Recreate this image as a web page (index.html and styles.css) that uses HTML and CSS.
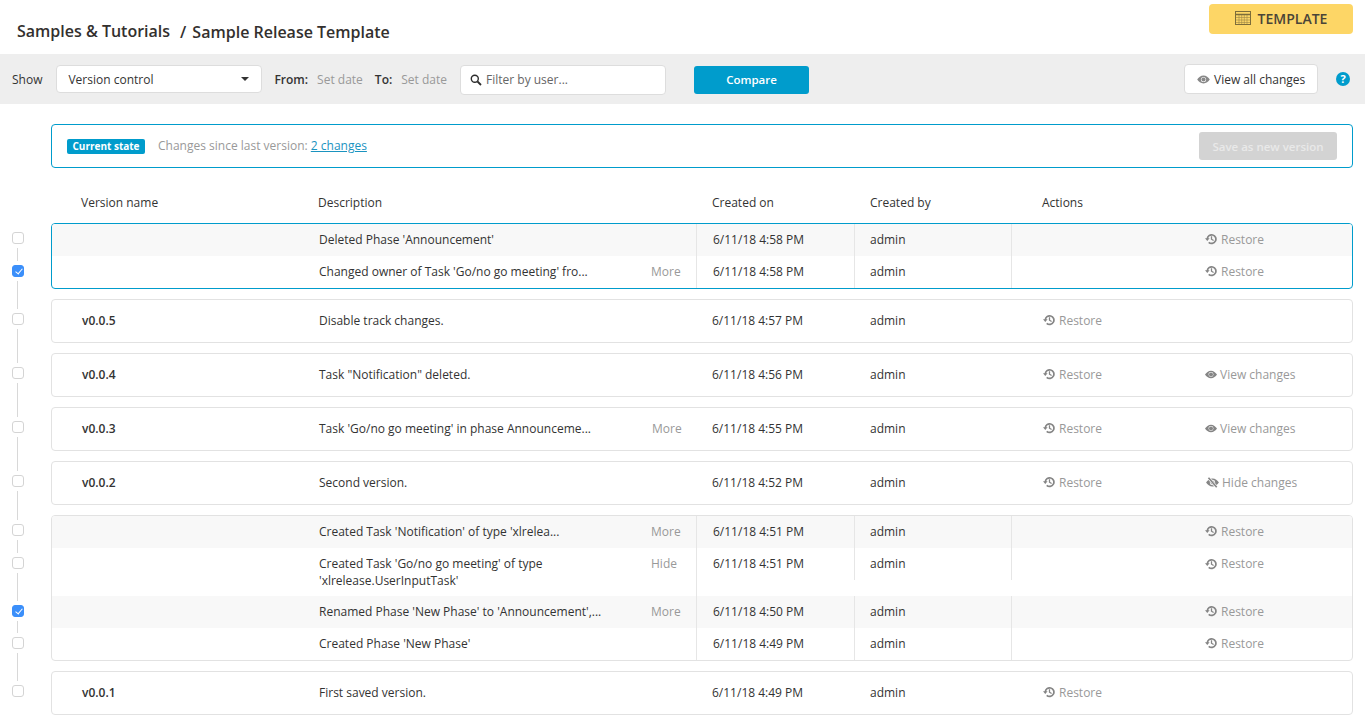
FILE: index.html
```html
<!DOCTYPE html>
<html lang="en">
<head>
<meta charset="utf-8">
<title>Sample Release Template</title>
<link rel="stylesheet" href="styles.css">
</head>
<body>
<svg class="defs" width="0" height="0" aria-hidden="true">
  <symbol id="restore" viewBox="0 0 12 12">
    <path d="M2.300 6a4.300 4.300 0 1 1 1.400 3.300" fill="none" stroke="currentColor" stroke-width="1.700"/>
    <path d="M0 5.200h4.600L2.300 8z" fill="currentColor"/>
    <path d="M6.500 3.200v3l2.100 1.300" fill="none" stroke="currentColor" stroke-width="1.300"/>
  </symbol>
  <symbol id="eye" viewBox="0 0 14 10">
    <path fill-rule="evenodd" fill="currentColor" d="M7 .6C10 .6 12.500 2.800 14 5c-1.500 2.200-4 4.400-7 4.400S1.500 7.200 0 5C1.500 2.800 4 .6 7 .6zM7 2.100a2.900 2.900 0 1 0 0 5.800 2.900 2.900 0 0 0 0-5.800z"/>
    <circle cx="7" cy="5" r="2.300" fill="currentColor"/>
  </symbol>
  <symbol id="eye-off" viewBox="0 0 14 12">
    <path fill-rule="evenodd" fill="currentColor" d="M7 1.600c3 0 5.500 2.200 7 4.400-1.500 2.200-4 4.400-7 4.400S1.500 8.200 0 6c1.500-2.200 4-4.400 7-4.400zM7 3.100a2.900 2.900 0 1 0 0 5.800 2.900 2.900 0 0 0 0-5.800z"/>
    <circle cx="7" cy="6" r="2.200" fill="currentColor"/>
    <path d="M2.600.8l9 10.400" stroke="#fff" stroke-width="3"/>
    <path d="M2.600.8l9 10.400" stroke="currentColor" stroke-width="1.800"/>
  </symbol>
</svg>

<header class="topbar">
  <h1 class="crumbs"><span class="crumb-folder">Samples &amp; Tutorials</span><span class="crumb-sep">/</span><span class="crumb-title">Sample Release Template</span></h1>
  <button class="template-btn" type="button">
    <svg class="template-icon" viewBox="0 0 16 14" aria-hidden="true">
      <rect x=".5" y=".5" width="15" height="13" fill="none" stroke="currentColor"/>
      <path d="M.5 3.500h15" stroke="currentColor" stroke-width="1.500"/>
      <path d="M4 4v9M6.700 4v9M9.300 4v9M12 4v9M1 6.500h14M1 9h14M1 11.500h14" stroke="currentColor" stroke-width=".6" opacity=".75"/>
    </svg>
    TEMPLATE
  </button>
</header>

<section class="toolbar">
  <span class="show-label">Show</span>
  <div class="select">Version control<span class="caret"></span></div>
  <span class="date-label from">From:</span><span class="date-value">Set date</span>
  <span class="date-label to">To:</span><span class="date-value">Set date</span>
  <div class="filter">
    <svg class="search-icon" viewBox="0 0 12 12" aria-hidden="true"><circle cx="4.800" cy="4.800" r="3.500" fill="none" stroke="currentColor" stroke-width="1.400"/><path d="M7.500 7.500l3.500 3.500" stroke="currentColor" stroke-width="1.800"/></svg>
    <span>Filter by user...</span>
  </div>
  <button class="compare-btn" type="button">Compare</button>
  <button class="view-all-btn" type="button"><svg class="eye-icon"><use href="#eye"/></svg>View all changes</button>
  <span class="help">?</span>
</section>

<main class="layout">
  <div class="rail">
    <div class="slot h33"><span class="tick"></span><span class="link"></span></div>
    <div class="slot h48"><span class="tick on"></span><span class="link"></span></div>
    <div class="slot h54"><span class="tick"></span><span class="link"></span></div>
    <div class="slot h54"><span class="tick"></span><span class="link"></span></div>
    <div class="slot h54"><span class="tick"></span><span class="link"></span></div>
    <div class="slot h49"><span class="tick"></span><span class="link"></span></div>
    <div class="slot h33"><span class="tick"></span><span class="link"></span></div>
    <div class="slot h48"><span class="tick"></span><span class="link"></span></div>
    <div class="slot h32"><span class="tick on"></span><span class="link"></span></div>
    <div class="slot h48"><span class="tick"></span><span class="link"></span></div>
    <div class="slot"><span class="tick"></span></div>
  </div>

  <div class="content">
    <div class="current">
      <span class="badge">Current state</span>
      <span class="since">Changes since last version: <a href="#">2 changes</a></span>
      <button class="save-btn" type="button">Save as new version</button>
    </div>

    <div class="heads">
      <span>Version name</span><span>Description</span><span>Created on</span><span>Created by</span><span>Actions</span>
    </div>

    <div class="cards">
      <div class="card active">
        <div class="row sub shaded">
          <div class="c-name"></div><div class="c-desc"><span>Deleted Phase 'Announcement'</span></div>
          <div class="c-date">6/11/18 4:58 PM</div><div class="c-user">admin</div><div class="c-act"></div>
          <div class="c-act2"><a class="action"><svg class="ico-restore"><use href="#restore"/></svg>Restore</a></div>
        </div>
        <div class="row sub">
          <div class="c-name"></div><div class="c-desc"><span>Changed owner of Task 'Go/no go meeting' fro...</span><a class="more">More</a></div>
          <div class="c-date">6/11/18 4:58 PM</div><div class="c-user">admin</div><div class="c-act"></div>
          <div class="c-act2"><a class="action"><svg class="ico-restore"><use href="#restore"/></svg>Restore</a></div>
        </div>
      </div>

      <div class="card">
        <div class="row ver">
          <div class="c-name">v0.0.5</div><div class="c-desc"><span>Disable track changes.</span></div>
          <div class="c-date">6/11/18 4:57 PM</div><div class="c-user">admin</div>
          <div class="c-act"><a class="action"><svg class="ico-restore"><use href="#restore"/></svg>Restore</a></div><div class="c-act2"></div>
        </div>
      </div>

      <div class="card">
        <div class="row ver">
          <div class="c-name">v0.0.4</div><div class="c-desc"><span>Task "Notification" deleted.</span></div>
          <div class="c-date">6/11/18 4:56 PM</div><div class="c-user">admin</div>
          <div class="c-act"><a class="action"><svg class="ico-restore"><use href="#restore"/></svg>Restore</a></div>
          <div class="c-act2"><a class="action"><svg class="ico-eye"><use href="#eye"/></svg>View changes</a></div>
        </div>
      </div>

      <div class="card">
        <div class="row ver">
          <div class="c-name">v0.0.3</div><div class="c-desc"><span>Task 'Go/no go meeting' in phase Announceme...</span><a class="more">More</a></div>
          <div class="c-date">6/11/18 4:55 PM</div><div class="c-user">admin</div>
          <div class="c-act"><a class="action"><svg class="ico-restore"><use href="#restore"/></svg>Restore</a></div>
          <div class="c-act2"><a class="action"><svg class="ico-eye"><use href="#eye"/></svg>View changes</a></div>
        </div>
      </div>

      <div class="card">
        <div class="row ver">
          <div class="c-name">v0.0.2</div><div class="c-desc"><span>Second version.</span></div>
          <div class="c-date">6/11/18 4:52 PM</div><div class="c-user">admin</div>
          <div class="c-act"><a class="action"><svg class="ico-restore"><use href="#restore"/></svg>Restore</a></div>
          <div class="c-act2"><a class="action hide"><svg class="ico-eye-off"><use href="#eye-off"/></svg>Hide changes</a></div>
        </div>
      </div>

      <div class="card">
        <div class="row sub shaded">
          <div class="c-name"></div><div class="c-desc"><span>Created Task 'Notification' of type 'xlrelea...</span><a class="more">More</a></div>
          <div class="c-date">6/11/18 4:51 PM</div><div class="c-user">admin</div><div class="c-act"></div>
          <div class="c-act2"><a class="action"><svg class="ico-restore"><use href="#restore"/></svg>Restore</a></div>
        </div>
        <div class="row sub tall">
          <div class="c-name"></div><div class="c-desc"><span class="wrap">Created Task 'Go/no go meeting' of type 'xlrelease.UserInputTask'</span><a class="more">Hide</a></div>
          <div class="c-date">6/11/18 4:51 PM</div><div class="c-user">admin</div><div class="c-act"></div>
          <div class="c-act2"><a class="action"><svg class="ico-restore"><use href="#restore"/></svg>Restore</a></div>
        </div>
        <div class="row sub shaded">
          <div class="c-name"></div><div class="c-desc"><span>Renamed Phase 'New Phase' to 'Announcement',...</span><a class="more">More</a></div>
          <div class="c-date">6/11/18 4:50 PM</div><div class="c-user">admin</div><div class="c-act"></div>
          <div class="c-act2"><a class="action"><svg class="ico-restore"><use href="#restore"/></svg>Restore</a></div>
        </div>
        <div class="row sub">
          <div class="c-name"></div><div class="c-desc"><span>Created Phase 'New Phase'</span></div>
          <div class="c-date">6/11/18 4:49 PM</div><div class="c-user">admin</div><div class="c-act"></div>
          <div class="c-act2"><a class="action"><svg class="ico-restore"><use href="#restore"/></svg>Restore</a></div>
        </div>
      </div>

      <div class="card">
        <div class="row ver">
          <div class="c-name">v0.0.1</div><div class="c-desc"><span>First saved version.</span></div>
          <div class="c-date">6/11/18 4:49 PM</div><div class="c-user">admin</div>
          <div class="c-act"><a class="action"><svg class="ico-restore"><use href="#restore"/></svg>Restore</a></div><div class="c-act2"></div>
        </div>
      </div>
    </div>
  </div>
</main>
</body>
</html>
```

FILE: styles.css
```css
* { box-sizing: border-box; }
html, body { margin: 0; padding: 0; }
body {
  font-family: "Open Sans", "Liberation Sans", sans-serif;
  font-size: 12px;
  line-height: 17px;
  color: #333;
  background: #fff;
  overflow: hidden;
}
button { font-family: inherit; cursor: pointer; }
.defs { position: absolute; }

/* Top bar */
.topbar {
  height: 54px;
  display: flex;
  justify-content: space-between;
  padding: 4px 12px 0 17px;
}
.crumbs {
  margin: 0;
  font-size: 16px;
  font-weight: 600;
  line-height: 22px;
  color: #33302e;
  display: flex;
  padding-top: 16px;
}
.crumb-sep { margin: 1px 6px 0 10px; }
.crumb-title { margin-top: 1px; }
.template-btn {
  width: 144px;
  height: 30px;
  padding: 0 0 2px;
  border: 0;
  border-radius: 4px;
  background: #fdd666;
  color: #4a4438;
  font-size: 14px;
  font-weight: 600;
  display: flex;
  align-items: center;
  justify-content: center;
  gap: 7px;
}
.template-icon { width: 16px; height: 14px; color: #7d6d3a; }

/* Toolbar */
.toolbar {
  height: 50px;
  background: #eee;
  display: flex;
  align-items: center;
  padding: 0 15px 0 12px;
}
.select {
  width: 206px;
  height: 28px;
  margin-left: 14px;
  padding: 0 12px 0 11px;
  background: #fff;
  border: 1px solid #ddd;
  border-radius: 4px;
  display: flex;
  align-items: center;
  justify-content: space-between;
}
.caret {
  width: 0; height: 0;
  border: 4px solid transparent;
  border-top: 4px solid #333;
  border-bottom: 0;
}
.date-label { font-weight: 600; }
.date-label.from { margin-left: 12px; }
.date-label.to { margin-left: 12px; }
.date-value { margin-left: 9px; color: #999; }
.filter {
  width: 206px;
  height: 30px;
  margin: 1px 0 0 13px;
  padding-left: 9px;
  background: #fff;
  border: 1px solid #ddd;
  border-radius: 4px;
  display: flex;
  align-items: center;
  gap: 4px;
  color: #666;
}
.search-icon { width: 12px; height: 12px; color: #2d2d2d; }
.compare-btn {
  width: 115px;
  height: 28px;
  margin: 1px 0 0 28px;
  border: 0;
  border-radius: 3px;
  background: #009ccc;
  color: #fff;
  font-size: 11.5px;
  font-weight: 600;
}
.view-all-btn {
  width: 134px;
  height: 30px;
  margin-left: auto;
  padding: 0 0 0 12px;
  background: #fff;
  border: 1px solid #ddd;
  border-radius: 4px;
  color: #333;
  font-size: 12px;
  display: flex;
  align-items: center;
  gap: 4px;
}
.eye-icon { width: 13px; height: 9px; color: #888; }
.help {
  width: 14px;
  height: 14px;
  margin-left: 18px;
  border-radius: 50%;
  background: #009ccc;
  color: #fff;
  font-size: 11px;
  font-weight: 700;
  line-height: 14px;
  text-align: center;
}

/* Page layout */
.layout {
  display: flex;
  padding: 20px 12px 0;
}
.rail {
  width: 39px;
  flex: none;
  margin-top: 108px;
}
.slot {
  width: 12px;
  display: flex;
  flex-direction: column;
  align-items: center;
}
.h32 { height: 32px; }
.h33 { height: 33px; }
.h48 { height: 48px; }
.h49 { height: 49px; }
.h54 { height: 54px; }
.tick {
  flex: none;
  position: relative;
  width: 12px;
  height: 12px;
  border: 1px solid #d4d4d4;
  border-radius: 3px;
  background: #fff;
}
.tick.on { background: #3b8ffa; border-color: #3b8ffa; }
.tick.on::after {
  content: "";
  position: absolute;
  left: 3.5px;
  top: 1px;
  width: 3px;
  height: 6px;
  border: solid #fff;
  border-width: 0 1.5px 1.5px 0;
  transform: rotate(40deg);
}
.link {
  flex: 1;
  width: 1px;
  margin: 4px 1px 4px 0;
  background: #d8d8d8;
}
.content { flex: 1; min-width: 0; }

/* Current state */
.current {
  height: 44px;
  border: 1px solid #009ccc;
  border-radius: 4px;
  display: flex;
  align-items: center;
  padding: 0 15px;
}
.badge {
  width: 78px;
  height: 15px;
  background: #009ccc;
  color: #fff;
  border-radius: 2px;
  font-size: 10px;
  font-weight: 700;
  line-height: 15px;
  text-align: center;
}
.since { margin: 0 0 1px 13px; color: #999; }
.since a { color: #1a93bf; text-decoration: underline; }
.save-btn {
  width: 138px;
  height: 28px;
  margin-left: auto;
  border: 0;
  border-radius: 3px;
  background: #d3d3d3;
  color: #e9e9e9;
  font-size: 11.5px;
  font-weight: 600;
}

/* Column heads */
.heads {
  height: 55px;
  display: grid;
  grid-template-columns: 237px 394px 158px 172px 1fr;
  align-items: center;
  padding: 14px 0 0 30px;
}

/* Cards */
.cards { display: flex; flex-direction: column; gap: 10px; }
.card {
  border: 1px solid #e2e2e2;
  border-radius: 4px;
  overflow: hidden;
}
.card.active { border-color: #009ccc; }
.row {
  display: grid;
  grid-template-columns: 267px 377px 158px 157px 194px 1fr;
  align-items: stretch;
}
.row.sub { height: 32px; }
.row.sub.tall { height: 48px; }
.row.ver { height: 42px; }
.row.shaded { background: #f8f8f8; }
.row > div {
  display: flex;
  align-items: center;
  padding-bottom: 2px;
}
.c-name { padding-left: 30px; font-weight: 600; }
.c-desc { justify-content: space-between; padding-right: 15px; }
.ver .c-desc { padding-right: 14px; }
.sub .c-date, .sub .c-user, .sub .c-act { border-left: 1px solid #e6e6e6; }
.c-date, .c-user { padding-left: 16px; }
.sub .c-user { padding-left: 15px; }
.c-act { padding-left: 31px; }
.row.tall > div { align-items: flex-start; padding-top: 7px; padding-bottom: 0; }
.tall .c-user, .tall .c-act { height: 32px; }
.wrap { width: 270px; }
.more { color: #999; width: 30px; }
.action {
  display: flex;
  align-items: center;
  gap: 4px;
  color: #999;
}
.ico-restore { width: 12px; height: 12px; color: #858585; }
.c-act .action { margin-left: 1px; }
.ico-eye { width: 12px; height: 9px; color: #858585; margin-right: -1px; }
.ico-eye-off { width: 13px; height: 11px; color: #858585; }
.action.hide { margin-left: 1px; gap: 3px; }
```
